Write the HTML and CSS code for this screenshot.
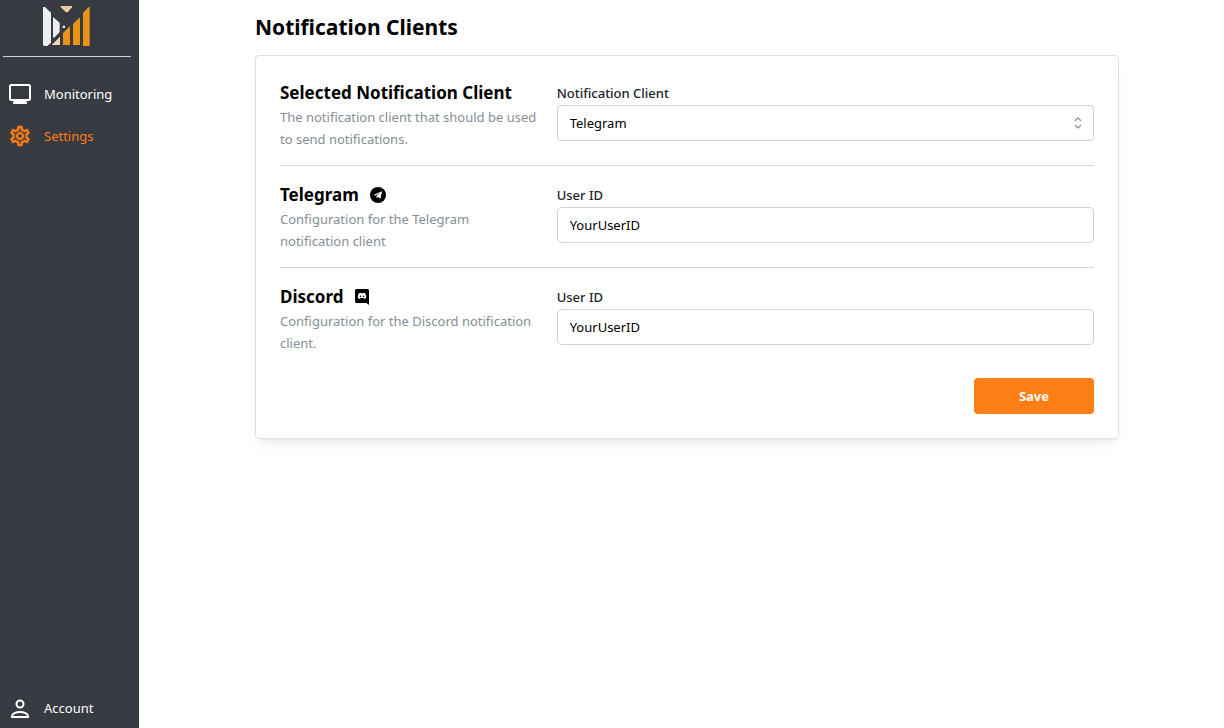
FILE: index.html
```html
<!DOCTYPE html>
<html lang="en">
<head>
<meta charset="utf-8">
<title>Notification Clients</title>
<meta name="viewport" content="width=device-width, initial-scale=1">
<link rel="stylesheet" href="styles.css">
</head>
<body>
<div class="app">
  <nav class="sidebar" aria-label="Main">
    <div class="brand">
      <svg class="logo" viewBox="0 0 186 156" role="img" aria-label="Logo">
        <path fill="#eeeeee" d="M21 21h6l18 17v90l-11 10H24l-3-4z"/>
        <path fill="#eeeeee" d="M51 51l20 17v28L54 114l-3-3zM80 77h7v7h-7z"/>
        <path fill="#ecd5bb" d="M72 110v25H47z"/>
        <path fill="#efcba2" d="M74 18h34v4L95 37h-5L74 22z"/>
        <path fill="#eb9316" d="M81 99l18-18h3v54H81zM111 72l19-19h2v82h-21zM141 39l17-18h3v117h-20z"/>
      </svg>
    </div>
    <a class="nav-link" href="#monitoring">
      <svg class="nav-icon" viewBox="0 0 24 24" fill="currentColor" aria-hidden="true"><path d="M21 2H3c-1.100 0-2 .9-2 2v13c0 1.100.9 2 2 2h3l-1 1v2h14v-2l-1-1h3c1.100 0 2-.9 2-2V4c0-1.100-.9-2-2-2zm0 15H3V4h18v13z"/></svg>
      <span>Monitoring</span>
    </a>
    <a class="nav-link nav-link-active" href="#settings" aria-current="page">
      <svg class="nav-icon" viewBox="0 0 24 24" fill="currentColor" stroke="currentColor" stroke-width=".5" aria-hidden="true"><path d="M19.430 12.980c.04-.32.07-.64.07-.98 0-.34-.03-.66-.07-.98l2.110-1.650c.19-.15.24-.42.12-.64l-2-3.460c-.09-.16-.26-.25-.44-.25-.06 0-.12.01-.17.03l-2.490 1c-.52-.4-1.080-.73-1.690-.98l-.38-2.650C14.460 2.180 14.250 2 14 2h-4c-.25 0-.46.18-.49.42l-.38 2.650c-.61.25-1.170.59-1.690.98l-2.490-1c-.06-.02-.12-.03-.18-.03-.17 0-.34.09-.43.25l-2 3.460c-.13.22-.07.49.12.64l2.110 1.650c-.04.32-.07.65-.07.98 0 .33.03.66.07.98l-2.110 1.650c-.19.15-.24.42-.12.64l2 3.460c.09.16.26.25.44.25.06 0 .12-.01.17-.03l2.490-1c.52.4 1.080.73 1.690.98l.38 2.650c.03.24.24.42.49.42h4c.25 0 .46-.18.49-.42l.38-2.650c.61-.25 1.170-.59 1.690-.98l2.490 1c.06.02.12.03.18.03.17 0 .34-.09.43-.25l2-3.460c.12-.22.07-.49-.12-.64l-2.110-1.650zm-1.980-1.710c.04.31.05.52.05.73 0 .21-.02.43-.05.73l-.14 1.130.89.7 1.080.84-.7 1.210-1.270-.51-1.040-.42-.9.68c-.43.32-.84.56-1.250.73l-1.060.43-.16 1.130-.2 1.350h-1.400l-.19-1.350-.16-1.130-1.060-.43c-.43-.18-.83-.41-1.230-.71l-.91-.7-1.060.43-1.270.51-.7-1.210 1.080-.84.89-.7-.14-1.130c-.03-.31-.05-.54-.05-.74s.02-.43.05-.73l.14-1.130-.89-.7-1.080-.84.7-1.210 1.270.51 1.040.42.9-.68c.43-.32.84-.56 1.250-.73l1.060-.43.16-1.130.2-1.350h1.390l.19 1.350.16 1.130 1.060.43c.43.18.83.41 1.230.71l.91.7 1.060-.43 1.270-.51.7 1.210-1.070.85-.89.7.14 1.130zM12 8c-2.210 0-4 1.790-4 4s1.790 4 4 4 4-1.790 4-4-1.790-4-4-4zm0 6c-1.100 0-2-.9-2-2s.9-2 2-2 2 .9 2 2-.9 2-2 2z"/></svg>
      <span>Settings</span>
    </a>
    <a class="nav-link nav-link-last" href="#account">
      <svg class="nav-icon" viewBox="0 0 24 24" fill="none" stroke="currentColor" stroke-width="2" aria-hidden="true"><circle cx="12" cy="8" r="3.500"/><path d="M4 21v-.8c0-2.400 4-4.200 8-4.200s8 1.800 8 4.200v.8z"/></svg>
      <span>Account</span>
    </a>
  </nav>
  <main class="content">
    <h1 class="page-title">Notification Clients</h1>
    <form class="card">
      <section class="row">
        <div class="about">
          <h2 class="section-title">Selected Notification Client</h2>
          <p class="description">The notification client that should be used to send notifications.</p>
        </div>
        <div class="field">
          <label class="label" for="client">Notification Client</label>
          <div class="select-wrap">
            <select class="control" id="client"><option>Telegram</option><option>Discord</option></select>
            <svg class="chevrons" viewBox="0 0 16 16" fill="none" stroke="#868e96" stroke-width="1.200" aria-hidden="true"><path d="M5 5.800L8 3l3 2.800M5 10.200L8 13l3-2.800"/></svg>
          </div>
        </div>
      </section>
      <section class="row">
        <div class="about">
          <h2 class="section-title">Telegram
            <svg class="title-icon" viewBox="0 0 16 16" aria-hidden="true"><circle cx="8" cy="8" r="8"/><path fill="#fff" d="M12 4.200L10.500 11.700 8 10 6.700 11.300 6.500 9 10 5.900 5.600 8.600 3.400 7.900z"/></svg>
          </h2>
          <p class="description">Configuration for the Telegram notification client</p>
        </div>
        <div class="field">
          <label class="label" for="telegram-id">User ID</label>
          <input class="control" id="telegram-id" type="text" value="YourUserID">
        </div>
      </section>
      <section class="row">
        <div class="about">
          <h2 class="section-title">Discord
            <svg class="title-icon" viewBox="0 0 16 16" aria-hidden="true"><path d="M2.500 0h11A1.500 1.500 0 0 1 15 1.500V16l-2.500-2h-10A1.500 1.500 0 0 1 1 12.500v-11A1.500 1.500 0 0 1 2.500 0z"/><path fill="#fff" d="M5 4.300l1.800-.6.4.6h1.700l.4-.6 1.800.6c.9 1.500 1.200 3 1.100 4.700-.7.500-1.300.8-2 .9l-.6-.9H6.500l-.6.9c-.7-.1-1.300-.4-2-.9-.1-1.700.2-3.200 1.100-4.700z"/><circle cx="6.500" cy="7.200" r=".8"/><circle cx="9.600" cy="7.200" r=".8"/></svg>
          </h2>
          <p class="description">Configuration for the Discord notification client.</p>
        </div>
        <div class="field">
          <label class="label" for="discord-id">User ID</label>
          <input class="control" id="discord-id" type="text" value="YourUserID">
        </div>
      </section>
      <div class="actions"><button class="save" type="submit">Save</button></div>
    </form>
  </main>
</div>
</body>
</html>
```
FILE: styles.css
```css
* { box-sizing: border-box; }

body {
  margin: 0;
  background: #fff;
  color: #000;
  font: 13px/22px "Segoe UI", "Noto Sans", sans-serif;
}

h1, h2, p { margin: 0; }

.app { display: flex; min-height: 100vh; }

.sidebar {
  display: flex;
  flex-direction: column;
  flex: 0 0 139px;
  padding: 0 8px 0 3px;
  background: #373a40;
}

.brand {
  display: flex;
  justify-content: center;
  padding-bottom: 4px;
  margin-bottom: 16px;
  border-bottom: 1px solid #ced4da;
}

.logo { width: 62px; height: 52px; }

.nav-link {
  display: flex;
  align-items: center;
  gap: 12px;
  height: 42px;
  padding-left: 5px;
  color: #fff;
  text-decoration: none;
}

.nav-link-active { color: #fd7e14; }
.nav-link-last { height: 40px; margin-top: auto; }
.nav-icon { width: 24px; height: 24px; }

.content { flex: 1; min-width: 0; padding: 11px 105px 24px 116px; }

.page-title { font-size: 21px; font-weight: 700; line-height: 32px; }

.card {
  margin-top: 12px;
  padding: 24px;
  border: 1px solid #dee2e6;
  border-radius: 4px;
  box-shadow: 0 1px 3px rgba(0, 0, 0, 0.05), 0 10px 15px -5px rgba(0, 0, 0, 0.05), 0 7px 7px -5px rgba(0, 0, 0, 0.04);
}

.row {
  display: grid;
  grid-template-columns: repeat(12, 1fr);
  gap: 16px;
  padding-bottom: 15px;
  margin-bottom: 16px;
  border-bottom: 1px solid #ced4da;
}

.row:nth-of-type(3) { margin-bottom: 0; border-bottom: 0; }

.about { grid-column: span 4; }
.field { grid-column: span 8; padding-top: 2px; }

.section-title {
  display: flex;
  align-items: center;
  gap: 11px;
  font-size: 17px;
  font-weight: 700;
  line-height: 26px;
  white-space: nowrap;
}

.title-icon { width: 16px; height: 16px; }
.description { color: #868e96; }

.label { display: block; margin-bottom: 1px; color: #212529; font-weight: 500; }

.control {
  display: block;
  width: 100%;
  height: 36px;
  padding: 0 12px;
  border: 1px solid #ced4da;
  border-radius: 4px;
  appearance: none;
  background: #fff;
  color: #000;
  font: inherit;
}

.select-wrap { position: relative; }

.chevrons {
  position: absolute;
  top: 10px;
  right: 8px;
  width: 16px;
  height: 16px;
  pointer-events: none;
}

.actions { display: flex; justify-content: flex-end; padding-top: 9px; }

.save {
  width: 120px;
  height: 36px;
  border: 0;
  border-radius: 4px;
  background: #fd7e14;
  color: #fff;
  font: inherit;
  font-weight: 700;
}
```
